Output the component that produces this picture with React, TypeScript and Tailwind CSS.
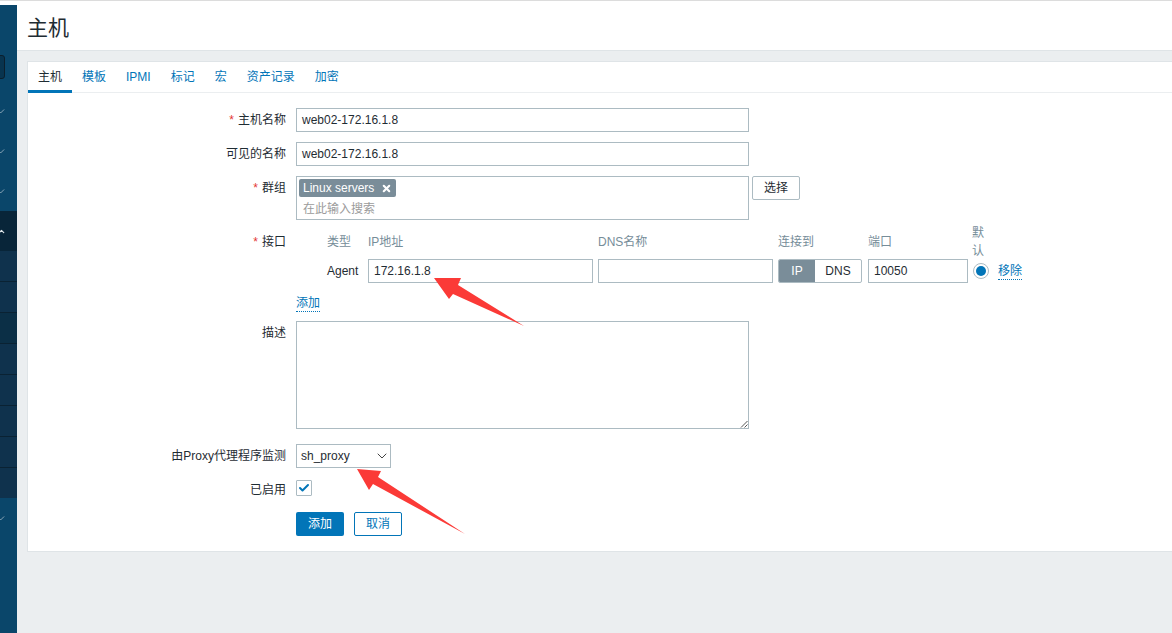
import { Check, ChevronDown, ChevronUp, X } from "lucide-react";

const FONT = "font-['Liberation_Sans','Noto_Sans_CJK_SC',sans-serif]";

const tabs = ["主机", "模板", "IPMI", "标记", "宏", "资产记录", "加密"];

function SideCheck() {
  return (
    <div className="h-[40px] flex items-center">
      <Check className="w-[7px] h-[7px] text-[#b9c9d4] ml-[-2px]" strokeWidth={2.5} />
    </div>
  );
}

function Sidebar() {
  return (
    <aside className="w-[17px] shrink-0 bg-[#0a466a] flex flex-col relative overflow-hidden">
      <div className="absolute left-[-12px] top-[50px] h-[24px] w-[17px] rounded-[3px] border border-[#0b1f2d] bg-[#08344f]" />
      <div className="h-[86px]" />
      <SideCheck />
      <SideCheck />
      <SideCheck />
      <div className="h-[40px] bg-[#082539] flex items-center">
        <ChevronUp className="w-[9px] h-[9px] text-[#dfe6ea] ml-[-3px]" strokeWidth={3} />
      </div>
      {[0, 1, 2, 3, 4, 5, 6, 7].map((i) => (
        <div
          key={i}
          className={`${i === 7 ? "h-[30px]" : "h-[31px] border-b border-[#0a2233]"} ${
            i === 2 ? "bg-[#0b2f46]" : "bg-[#0f324d]"
          }`}
        />
      ))}
      <SideCheck />
    </aside>
  );
}

function Row({
  label,
  required,
  className,
  labelClass,
  children,
}: {
  label: string;
  required?: boolean;
  className?: string;
  labelClass?: string;
  children: React.ReactNode;
}) {
  return (
    <div className={`flex ${className ?? ""}`}>
      <div
        className={`w-[268px] shrink-0 text-right pr-[10px] text-[12px] leading-[24px] text-[#1f2c33] ${labelClass ?? ""}`}
      >
        {required && <span className="text-[#e33734] mr-[4px]">*</span>}
        {label}
      </div>
      {children}
    </div>
  );
}

function TextBox({ value, className }: { value?: string; className?: string }) {
  return (
    <div
      className={`h-[24px] border border-[#acbbc2] px-[5px] text-[12px] leading-[22px] text-[#1f2c33] ${className ?? ""}`}
    >
      {value}
    </div>
  );
}

function Arrow({ className, box, points }: { className: string; box: string; points: string }) {
  return (
    <svg className={`absolute ${className}`} viewBox={box}>
      <polygon points={points} fill="#fb3a37" />
    </svg>
  );
}

export default function App() {
  return (
    <div className={`${FONT} w-[1172px] h-[633px] overflow-hidden bg-[#ebeef0] relative`}>
      <div className="h-[5px] bg-white border-t border-[#dcdcdc]" />
      <div className="flex h-[628px]">
        <Sidebar />
        <main className="flex-1 min-w-0">
          <header className="h-[46px] bg-white border-b border-[#dfe4e7] pl-[10px] text-[21px] leading-[45px] text-[#1f2c33]">
            主机
          </header>
          <div className="ml-[10px] mt-[10px] h-[491px] bg-white border-l border-t border-b border-[#dfe4e7]">
            <nav className="flex h-[31px] border-b border-[#ebeef0] text-[12px]">
              {tabs.map((t, i) => (
                <div
                  key={t}
                  className={`px-[10px] leading-[30px] h-[31px] ${
                    i === 0
                      ? "text-[#1f2c33] border-b-[3px] border-[#0275b8]"
                      : "text-[#0275b8]"
                  }`}
                >
                  {t}
                </div>
              ))}
            </nav>

            <form className="pt-[15px]">
              <Row label="主机名称" required>
                <TextBox value="web02-172.16.1.8" className="w-[453px]" />
              </Row>
              <Row label="可见的名称" className="mt-[10px]">
                <TextBox value="web02-172.16.1.8" className="w-[453px]" />
              </Row>
              <Row label="群组" required className="mt-[10px]">
                <div className="w-[453px] h-[44px] border border-[#acbbc2] px-[2px] pt-[2px]">
                  <div className="flex w-fit items-center h-[18px] px-[4px] rounded-[2px] bg-[#7a8d99] text-white text-[12px]">
                    Linux servers
                    <X className="w-[11px] h-[11px] ml-[7px]" strokeWidth={4.5} />
                  </div>
                  <div className="mt-[2px] text-[12px] leading-[20px] pl-[4px] text-[#9b9b9b]">在此输入搜索</div>
                </div>
                <div className="ml-[3px] w-[48px] h-[24px] border border-[#acbbc2] rounded-[2px] text-center text-[12px] leading-[22px] text-[#1f2c33]">
                  选择
                </div>
              </Row>
              <Row label="接口" required labelClass="pt-[8px]" className="mt-[2px]">
                <div className="flex flex-col">
                  <div className="flex items-end h-[37px] text-[12px] text-[#768d99]">
                    <div className="w-[72px] pl-[31px] leading-[24px] mb-[5px]">类型</div>
                    <div className="w-[230px] leading-[24px] mb-[5px]">IP地址</div>
                    <div className="w-[180px] leading-[24px] mb-[5px]">DNS名称</div>
                    <div className="w-[90px] leading-[24px] mb-[5px]">连接到</div>
                    <div className="w-[104px] leading-[24px] mb-[5px]">端口</div>
                    <div className="w-[14px] leading-[18px] mb-[-1px]">默认</div>
                  </div>
                  <div className="flex items-center h-[24px] text-[12px] text-[#1f2c33]">
                    <div className="w-[72px] pl-[31px]">Agent</div>
                    <TextBox value="172.16.1.8" className="w-[225px]" />
                    <TextBox className="w-[175px] ml-[5px]" />
                    <div className="ml-[5px] flex h-[24px] w-[84px] rounded-[2px] border border-[#acbbc2] overflow-hidden">
                      <div className="w-[36px] bg-[#7a8d99] text-white text-center leading-[22px]">IP</div>
                      <div className="flex-1 text-center leading-[22px]">DNS</div>
                    </div>
                    <TextBox value="10050" className="w-[100px] ml-[6px]" />
                    <div className="ml-[5px] w-[16px] h-[16px] rounded-full border border-[#acbbc2] flex items-center justify-center">
                      <div className="w-[10px] h-[10px] rounded-full bg-[#0275b8]" />
                    </div>
                    <span className="ml-[9px] mt-[2px] text-[#0275b8] border-b border-dotted border-[#0275b8] leading-[15px]">
                      移除
                    </span>
                  </div>
                  <div className="mt-[7px] h-[23px]">
                    <span className="inline-block text-[12px] leading-[15px] text-[#0275b8] border-b border-dotted border-[#0275b8]">
                      添加
                    </span>
                  </div>
                </div>
              </Row>
              <Row label="描述" className="mt-[8px]">
                <div className="w-[453px] h-[108px] border border-[#acbbc2] relative">
                  <svg className="absolute right-0 bottom-0 w-[8px] h-[8px]" viewBox="0 0 8 8">
                    <path d="M7.5 1 1 7.5M7.5 4.5 4.5 7.5" stroke="#555" strokeWidth="1" fill="none" />
                  </svg>
                </div>
              </Row>
              <Row label="由Proxy代理程序监测" className="mt-[15px]">
                <div className="w-[95px] h-[24px] border border-[#acbbc2] pl-[4px] flex items-center justify-between text-[12px] text-[#1f2c33]">
                  sh_proxy
                  <ChevronDown className="w-[16px] h-[16px] text-[#444]" strokeWidth={1.5} />
                </div>
              </Row>
              <Row label="已启用" className="mt-[10px]">
                <div className="mt-[2px] h-[16px] w-[16px] border border-[#acbbc2] rounded-[1px] flex items-center justify-center">
                  <Check className="w-[12px] h-[12px] text-[#0275b8]" strokeWidth={4} />
                </div>
              </Row>
              <div className="flex pl-[268px] mt-[10px] text-[12px]">
                <div className="w-[48px] h-[24px] rounded-[2px] bg-[#0275b8] text-white text-center leading-[24px]">
                  添加
                </div>
                <div className="ml-[10px] w-[48px] h-[24px] rounded-[2px] border border-[#0275b8] text-[#0275b8] text-center leading-[22px]">
                  取消
                </div>
              </div>
            </form>
          </div>
        </main>
      </div>
      <Arrow
        className="left-[430px] top-[275px] w-[100px] h-[60px]"
        box="0 0 100 60"
        points="4,3 31,3 28,10 94,51 23,19 19,24"
      />
      <Arrow
        className="left-[355px] top-[465px] w-[115px] h-[75px]"
        box="0 0 115 75"
        points="2,4 26,6 23,12 110,69 18,19 14,25"
      />
    </div>
  );
}
